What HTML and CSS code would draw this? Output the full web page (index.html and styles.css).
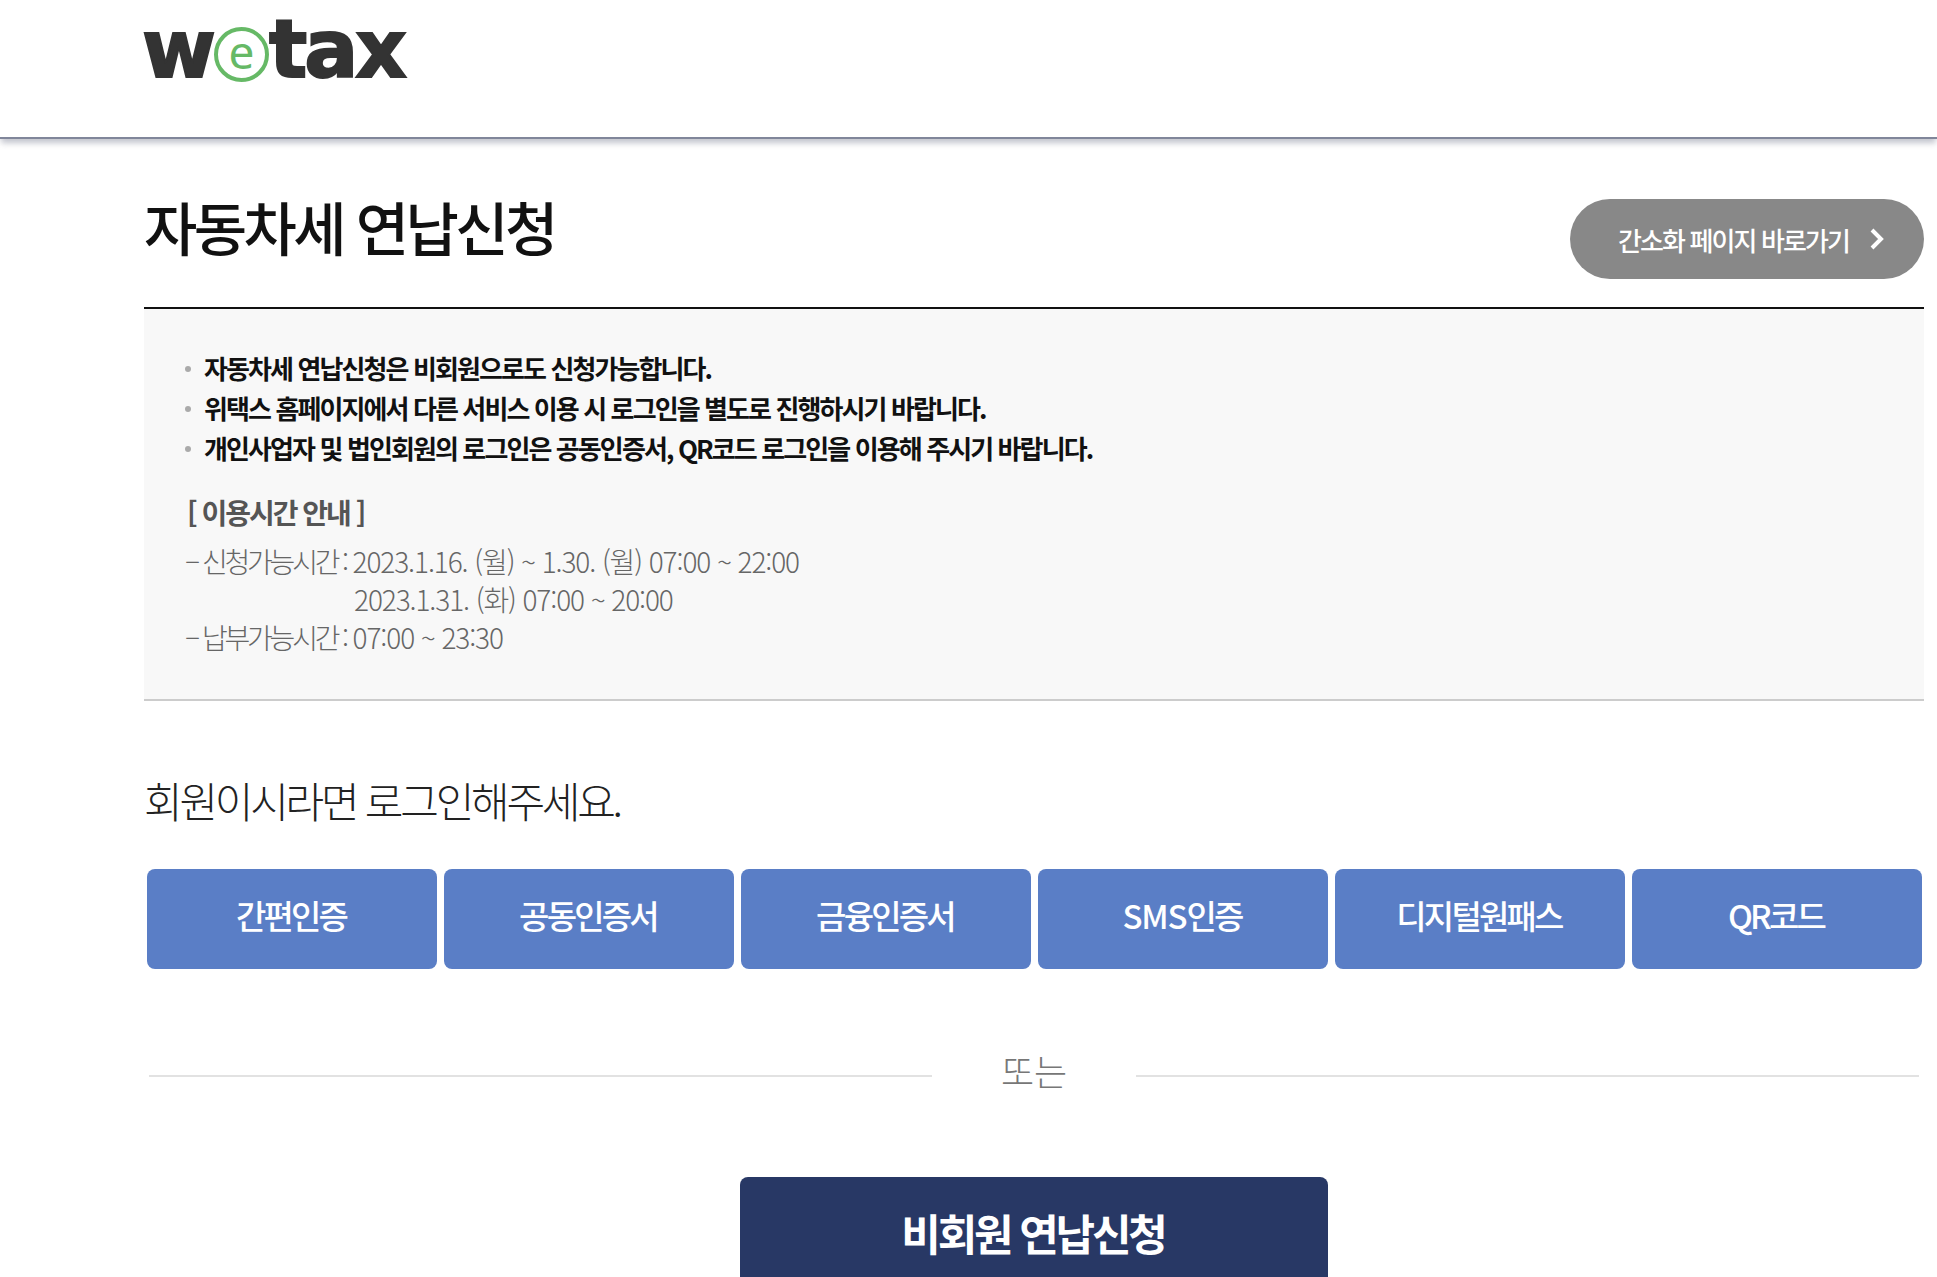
FILE: index.html
```html
<!DOCTYPE html>
<html lang="ko">
<head>
<meta charset="utf-8">
<title>자동차세 연납신청</title>
<link rel="stylesheet" href="styles.css">
</head>
<body>
<header class="site-header">
  <div class="logo"><span class="logo-w">w</span><span class="logo-e">e</span><span class="logo-tax">tax</span></div>
</header>
<main class="content">
  <div class="title-row">
    <h1 class="title">자동차세 연납신청</h1>
    <a class="simple-link">간소화 페이지 바로가기
      <svg class="chev" width="16" height="24" viewBox="0 0 16 24"><path d="M3 3 L12 12 L3 21" fill="none" stroke="#fff" stroke-width="4"/></svg>
    </a>
  </div>
  <section class="notice">
    <ul class="notice-list">
      <li>자동차세 연납신청은 비회원으로도 신청가능합니다.</li>
      <li>위택스 홈페이지에서 다른 서비스 이용 시 로그인을 별도로 진행하시기 바랍니다.</li>
      <li>개인사업자 및 법인회원의 로그인은 공동인증서, QR코드 로그인을 이용해 주시기 바랍니다.</li>
    </ul>
    <h2 class="time-title">[ 이용시간 안내 ]</h2>
    <p class="time-line">– <span class="time-label">신청가능시간 :</span> <span class="time-value">2023.1.16. (월) ~ 1.30. (월) 07:00 ~ 22:00</span></p>
    <p class="time-line time-indent"><span class="time-value time-value-next">2023.1.31. (화) 07:00 ~ 20:00</span></p>
    <p class="time-line">– <span class="time-label">납부가능시간 :</span> <span class="time-value">07:00 ~ 23:30</span></p>
  </section>
  <h2 class="login-title">회원이시라면 로그인해주세요.</h2>
  <div class="login-grid">
    <a class="login-btn">간편인증</a>
    <a class="login-btn">공동인증서</a>
    <a class="login-btn">금융인증서</a>
    <a class="login-btn"><span class="latin">SMS</span>인증</a>
    <a class="login-btn">디지털원패스</a>
    <a class="login-btn">QR코드</a>
  </div>
  <div class="divider"><span class="divider-text">또는</span></div>
  <a class="guest-btn">비회원 연납신청</a>
</main>
</body>
</html>
```
FILE: styles.css
```css
* { box-sizing: border-box; }
html, body { margin: 0; padding: 0; height: 100%; overflow: hidden; background: #fff; }
body { font-family: "Noto Sans CJK KR", "Noto Sans", sans-serif; color: #111; }
h1, h2, p, ul { margin: 0; padding: 0; }

.site-header {
  height: 139px;
  border-bottom: 2px solid #80869a;
  box-shadow: 0 5px 6px -1px rgba(120, 125, 145, .45);
  padding-left: 142px;
}
.logo {
  display: flex;
  align-items: baseline;
  height: 100px;
  font-family: "DejaVu Sans", sans-serif;
  font-weight: 700;
  font-size: 80px;
  line-height: 100px;
  color: #333;
  letter-spacing: -3px;
}
.logo-w { -webkit-text-stroke: 2px #333; }
.logo-tax { -webkit-text-stroke: 2px #333; margin-left: -1px; }
.logo-e {
  width: 55px;
  height: 55px;
  margin: 0 1px;
  align-self: flex-end;
  margin-bottom: 18px;
  border: 4px solid #66b966;
  border-radius: 50%;
  color: #66b966;
  font-family: "Noto Sans", sans-serif;
  font-weight: 400;
  font-size: 46px;
  line-height: 40px;
  text-align: center;
  letter-spacing: 0;
}

.content { margin-left: 144px; width: 1780px; }
.title-row {
  display: flex;
  justify-content: space-between;
  align-items: flex-start;
  height: 170px;
  border-bottom: 2px solid #111;
  padding-top: 60px;
}
.title {
  font-size: 58px;
  font-weight: 500;
  letter-spacing: -3.6px;
  line-height: 60px;
  margin-top: -3px;
  color: #111;
}
.simple-link {
  display: flex;
  align-items: center;
  justify-content: center;
  gap: 20px;
  width: 354px;
  height: 80px;
  padding-left: 9px;
  border-radius: 40px;
  background: #888;
  color: #fff;
  font-size: 26px;
  font-weight: 500;
  letter-spacing: -1.9px;
}
.chev { display: block; }

.notice {
  height: 392px;
  background: #f8f8f8;
  border-bottom: 2px solid #ccc;
  padding: 39px 0 0 41px;
}
.notice-list { list-style: none; }
.notice-list li {
  position: relative;
  padding-left: 19px;
  font-size: 26px;
  font-weight: 700;
  line-height: 40px;
  letter-spacing: -1.9px;
  color: #111;
}
.notice-list li::before {
  content: "";
  position: absolute;
  left: 0;
  top: 18px;
  width: 6px;
  height: 6px;
  border-radius: 50%;
  background: #aaa;
}
.time-title {
  margin: 23px 0 9px 2px;
  font-size: 28px;
  font-weight: 700;
  line-height: 42px;
  letter-spacing: -2px;
  color: #555;
}
.time-line {
  font-size: 28px;
  font-weight: 300;
  line-height: 38px;
  letter-spacing: -3px;
  color: #666;
  white-space: nowrap;
}
.time-label { letter-spacing: -3.2px; }
.time-value { margin-left: 2px; letter-spacing: -1.1px; font-variant-numeric: tabular-nums; }
.time-value-next { margin-left: 0; }
.time-indent { padding-left: 169px; }

.login-title {
  margin-top: 69px;
  font-size: 42px;
  font-weight: 300;
  line-height: 60px;
  letter-spacing: -3.25px;
  color: #222;
}
.login-grid {
  display: grid;
  grid-template-columns: repeat(6, 290px);
  gap: 7px;
  margin: 39px 0 0 3px;
}
.login-btn {
  display: flex;
  align-items: center;
  justify-content: center;
  height: 100px;
  padding: 0 2px 8px 0;
  border-radius: 8px;
  background: #5a7ec6;
  color: #fff;
  font-size: 33px;
  font-weight: 500;
  letter-spacing: -2.8px;
}
.latin { letter-spacing: -1.2px; }
.divider {
  position: relative;
  display: flex;
  justify-content: center;
  align-items: center;
  width: 1770px;
  height: 60px;
  margin: 77px 0 0 5px;
  background: linear-gradient(#e2e2e2, #e2e2e2) center / 100% 2px no-repeat;
}
.divider-text {
  width: 204px;
  background: #fff;
  text-align: center;
  font-size: 36px;
  font-weight: 300;
  line-height: 60px;
  color: #777;
  padding-bottom: 12px;
}
.guest-btn {
  display: flex;
  align-items: center;
  justify-content: center;
  width: 588px;
  height: 110px;
  padding: 0 2px 1px 0;
  margin: 71px 0 0 596px;
  border-radius: 8px;
  background: #283865;
  color: #fff;
  font-size: 43px;
  font-weight: 700;
  letter-spacing: -3.2px;
}
```
